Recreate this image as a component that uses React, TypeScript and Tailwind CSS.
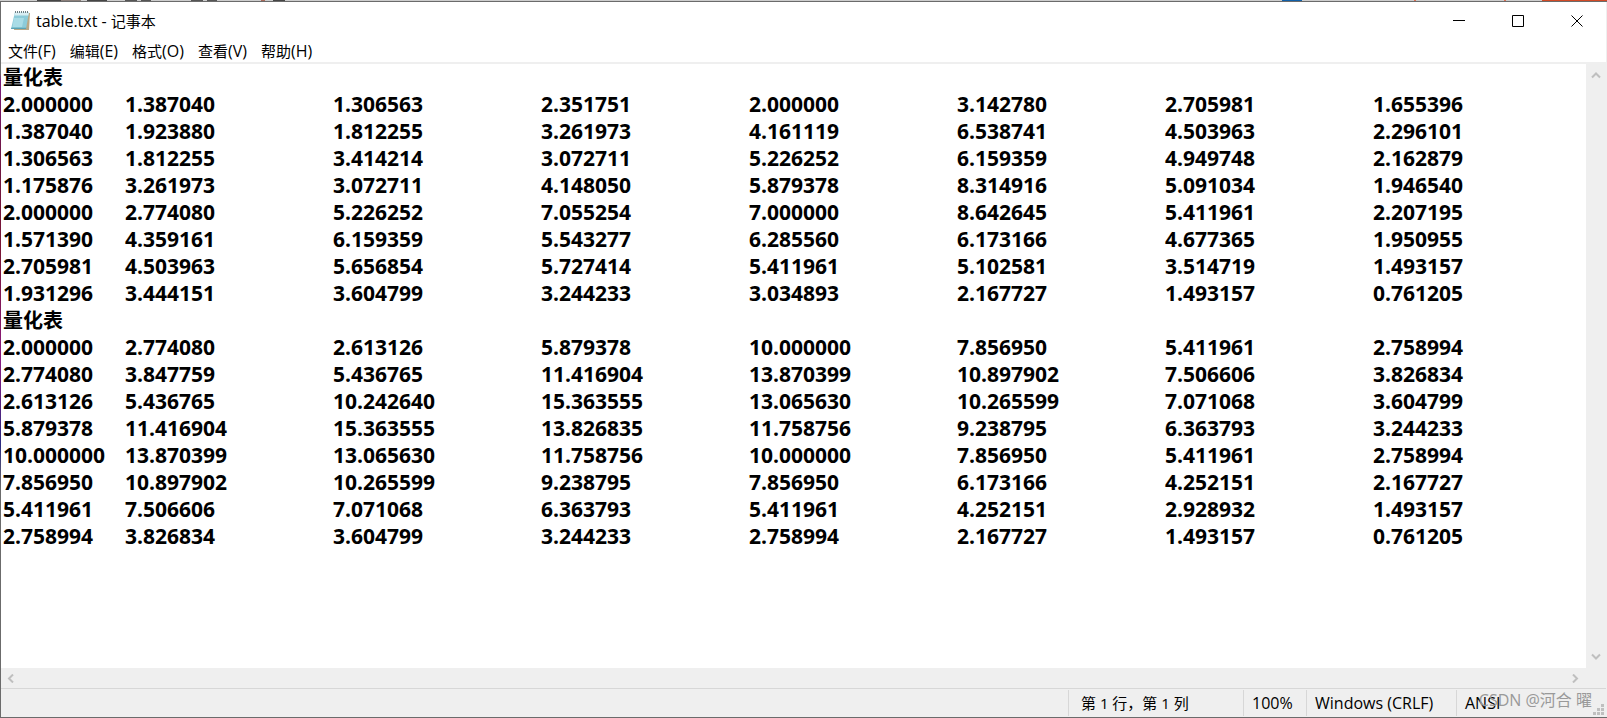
import type { ReactNode } from "react";

const menus = [
  ["文件", "(F)"],
  ["编辑", "(E)"],
  ["格式", "(O)"],
  ["查看", "(V)"],
  ["帮助", "(H)"],
];

const tables = [
  `2.000000 1.387040 1.306563 2.351751 2.000000 3.142780 2.705981 1.655396
1.387040 1.923880 1.812255 3.261973 4.161119 6.538741 4.503963 2.296101
1.306563 1.812255 3.414214 3.072711 5.226252 6.159359 4.949748 2.162879
1.175876 3.261973 3.072711 4.148050 5.879378 8.314916 5.091034 1.946540
2.000000 2.774080 5.226252 7.055254 7.000000 8.642645 5.411961 2.207195
1.571390 4.359161 6.159359 5.543277 6.285560 6.173166 4.677365 1.950955
2.705981 4.503963 5.656854 5.727414 5.411961 5.102581 3.514719 1.493157
1.931296 3.444151 3.604799 3.244233 3.034893 2.167727 1.493157 0.761205`,
  `2.000000 2.774080 2.613126 5.879378 10.000000 7.856950 5.411961 2.758994
2.774080 3.847759 5.436765 11.416904 13.870399 10.897902 7.506606 3.826834
2.613126 5.436765 10.242640 15.363555 13.065630 10.265599 7.071068 3.604799
5.879378 11.416904 15.363555 13.826835 11.758756 9.238795 6.363793 3.244233
10.000000 13.870399 13.065630 11.758756 10.000000 7.856950 5.411961 2.758994
7.856950 10.897902 10.265599 9.238795 7.856950 6.173166 4.252151 2.167727
5.411961 7.506606 7.071068 6.363793 5.411961 4.252151 2.928932 1.493157
2.758994 3.826834 3.604799 3.244233 2.758994 2.167727 1.493157 0.761205`,
].map((text) => text.split("\n").map((line) => line.split(" ")));

export default function App() {
  return (
    <div className="flex min-h-screen flex-col bg-white font-['Open_Sans','Noto_Sans_CJK_SC',sans-serif] text-black">
      <DesktopStrip />
      <div className="flex grow border-y border-[#6b6b6b]">
        {/* window edge, tinted by the desktop under it */}
        <div className="w-px shrink-0 bg-[linear-gradient(#6b6b6b_10%,#7a1a78_11%,#6e1540_22%,#7a1535_35%,#8a1a80_50%,#2a2a80_62%,#6b6b6b_68%,#6b6b6b)]" />
        <div className="flex min-w-0 grow flex-col border-r border-[#efefef]">
          <TitleBar />
          <MenuBar />
          <div className="flex grow border-t-2 border-[#efefef]">
            <main className="min-w-0 grow pl-[2px]">
              {tables.map((rows, i) => (
                <NumberTable key={i} rows={rows} />
              ))}
            </main>
            <div className="flex w-5 shrink-0 flex-col items-center justify-between bg-[#efefef] py-[7px]">
              <ScrollButton label="向上滚动" d="M1 6.5 5 2.5 9 6.5" />
              <ScrollButton label="向下滚动" d="M1 2.5 5 6.5 9 2.5" />
            </div>
          </div>
          <div className="flex h-5 items-center justify-between bg-[#efefef] pr-[26px] pl-[5px]">
            <ScrollButton label="向左滚动" d="M7 .5 3 4.5 7 8.5" />
            <ScrollButton label="向右滚动" d="M3 .5 7 4.5 3 8.5" />
          </div>
          <StatusBar />
        </div>
      </div>
    </div>
  );
}

// Sliver of the windows lying behind this one
function DesktopStrip() {
  return (
    <div className="flex h-px bg-[#cdcdcd]">
      <div className="ml-[37px] w-6 bg-[#454545]" />
      <div className="w-5 bg-[#8b7f7a]" />
      <div className="ml-1.5 w-5 bg-[#454545]" />
      <div className="ml-[18px] w-3 bg-[#555555]" />
      <div className="ml-1 w-2.5 bg-[#555555]" />
      <div className="ml-10 w-3 bg-[#555555]" />
      <div className="ml-1 w-2.5 bg-[#555555]" />
      <div className="ml-11 w-1 bg-[#a86a5a]" />
      <div className="ml-2 w-3 bg-[#454545]" />
      <div className="ml-auto w-5 bg-[#1160a8]" />
      <div className="ml-28 w-0.5 bg-[#d97055]" />
      <div className="ml-[88px] w-0.5 bg-[#d97055]" />
      <div className="ml-9 w-[65px] bg-[#d24a26]" />
    </div>
  );
}

function TitleBar() {
  return (
    <header className="flex h-[37px] items-center pl-[9px]">
      <NotepadIcon />
      <h1 className="ml-1 grow text-base leading-6">
        table.txt - <span className="text-[15px]">记事本</span>
      </h1>
      <CaptionButton label="最小化">
        <path d="M0 5.5h12" />
      </CaptionButton>
      <CaptionButton label="最大化">
        <path d="M.5.5h11v11H.5z" />
      </CaptionButton>
      <CaptionButton label="关闭">
        <path d="m.5.5 11 11m0-11-11 11" />
      </CaptionButton>
    </header>
  );
}

function CaptionButton({ label, children }: { label: string; children: ReactNode }) {
  return (
    <button aria-label={label} className="flex h-full w-[59px] items-center justify-center">
      <svg width="12" height="12" fill="none" stroke="#000">
        {children}
      </svg>
    </button>
  );
}

function MenuBar() {
  return (
    <nav className="flex h-[23px] items-center gap-[14px] pl-[7px]">
      {menus.map(([name, accessKey]) => (
        <button key={name} className="text-[15px] leading-6">
          {name}
          <span className="text-base leading-6">{accessKey}</span>
        </button>
      ))}
    </nav>
  );
}

function NumberTable({ rows }: { rows: string[][] }) {
  return (
    <table className="w-full table-fixed text-left text-[21px] leading-[27px] font-bold">
      <caption className="h-[27px] pt-px text-left text-xl leading-[26px]">量化表</caption>
      <colgroup>
        <col className="w-[122px]" />
        {rows[0].slice(2).map((_, i) => (
          <col key={i} className="w-[208px]" />
        ))}
        <col />
      </colgroup>
      <tbody>
        {rows.map((row, i) => (
          <tr key={i}>
            {row.map((value, j) => (
              <td key={j} className="h-[27px] p-0">
                {value}
              </td>
            ))}
          </tr>
        ))}
      </tbody>
    </table>
  );
}

function ScrollButton({ label, d }: { label: string; d: string }) {
  return (
    <button aria-label={label}>
      <svg className="block" width="10" height="9" fill="none" stroke="#bfbfbf" strokeWidth="2">
        <path d={d} />
      </svg>
    </button>
  );
}

function StatusBar() {
  return (
    <footer className="relative flex h-[29px] justify-end border-t border-[#d7d7d7] bg-[#efefef] py-px text-base leading-[26px]">
      <div className="w-[175px] border-l border-[#d7d7d7] pl-3 text-[15px] leading-[26px]">第 1 行，第 1 列</div>
      <div className="w-[63px] border-l border-[#d7d7d7] pl-2">100%</div>
      <div className="w-[150px] border-l border-[#d7d7d7] pl-2">Windows (CRLF)</div>
      <div className="w-[150px] border-l border-[#d7d7d7] pl-2">ANSI</div>
      <div className="absolute right-[14px] bottom-[5px] text-base leading-6 text-[#999999]">CSDN @河合 曜</div>
      <svg className="absolute right-0 bottom-px" width="13" height="12" fill="#bfbfbf">
        <path d="M8 0h3v3H8zM4 4h3v3H4zM8 4h3v3H8zM0 8h3v3H0zM4 8h3v3H4zM8 8h3v3H8z" />
      </svg>
    </footer>
  );
}

function NotepadIcon() {
  return (
    <svg width="22" height="22" viewBox="0 0 22 22">
      <path d="M6 3h14l-1 17H4z" fill="#b9a886" />
      <path d="M5 2h14l-3 17H1z" fill="#8ccbd9" />
      <path d="M5 2h14l-.6 3.500H4.300z" fill="#d8eef3" />
      <path d="M4 8h10l-2 9H2.500z" fill="#a9dce6" />
      <path d="M16 19H1l.2-1.200h15z" fill="#5aa3b5" />
      <path d="M5 2h14" stroke="#6f7f85" strokeWidth="2" strokeDasharray="1 1" />
    </svg>
  );
}
